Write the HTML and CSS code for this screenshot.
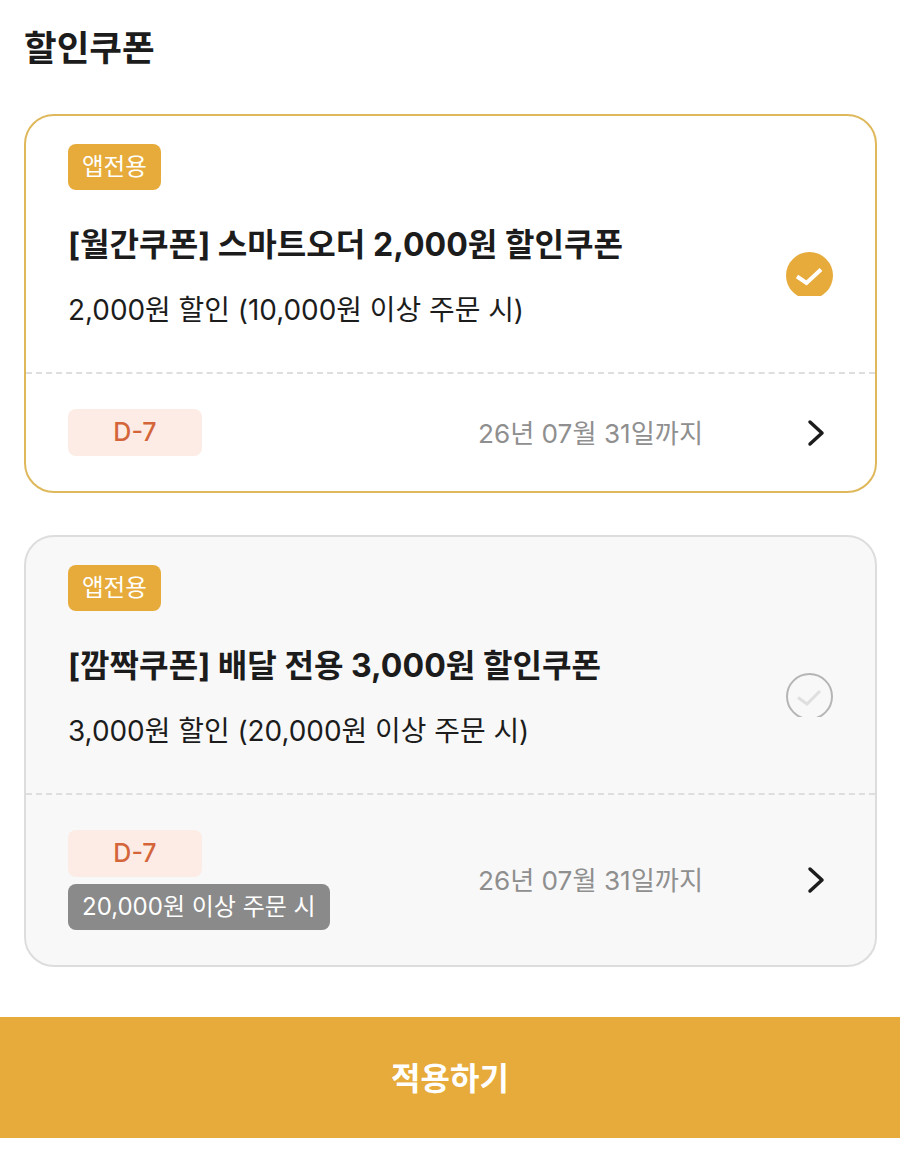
FILE: index.html
```html
<!DOCTYPE html>
<html lang="ko">
<head>
    <meta charset="UTF-8">
    <meta name="viewport" content="width=device-width, initial-scale=1.0">
    <title>할인쿠폰</title>
    <link rel="stylesheet" href="styles.css">
</head>
<body>
    <div class="container">
        <h1>할인쿠폰</h1>

        <div class="coupon coupon-selected">
            <div class="coupon-top">
                <div class="coupon-info">
                    <span class="badge-app">앱전용</span>
                    <h3>[월간쿠폰] 스마트오더 2,000원 할인쿠폰</h3>
                    <p>2,000원 할인 (10,000원 이상 주문 시)</p>
                </div>
                <svg class="check" width="47" height="44" viewBox="0 0 47 44">
                    <circle cx="23.5" cy="23.5" r="23.5" fill="#e6ab3a"/>
                    <path d="M11 24.5l9.500 6.500L35 17.500" fill="none" stroke="#fff" stroke-width="4"/>
                </svg>
            </div>
            <div class="coupon-bottom">
                <div class="tags">
                    <span class="tag-day">D-7</span>
                </div>
                <span class="date">26년 07월 31일까지</span>
                <svg class="arrow" width="20" height="28" viewBox="0 0 20 28">
                    <path d="M3 3l12 11L3 25" fill="none" stroke="#1c1c1c" stroke-width="3.500" stroke-linecap="round" stroke-linejoin="round"/>
                </svg>
            </div>
        </div>

        <div class="coupon coupon-disabled">
            <div class="coupon-top">
                <div class="coupon-info">
                    <span class="badge-app">앱전용</span>
                    <h3>[깜짝쿠폰] 배달 전용 3,000원 할인쿠폰</h3>
                    <p>3,000원 할인 (20,000원 이상 주문 시)</p>
                </div>
                <svg class="check" width="47" height="44" viewBox="0 0 47 44">
                    <circle cx="23.5" cy="23.5" r="22.500" fill="none" stroke="#b5b5b5" stroke-width="2"/>
                    <path d="M12 24.5l9 6.500L34 18" fill="none" stroke="#dfdfdf" stroke-width="3"/>
                </svg>
            </div>
            <div class="coupon-bottom">
                <div class="tags">
                    <span class="tag-day">D-7</span>
                    <span class="tag-min">20,000원 이상 주문 시</span>
                </div>
                <span class="date">26년 07월 31일까지</span>
                <svg class="arrow" width="20" height="28" viewBox="0 0 20 28">
                    <path d="M3 3l12 11L3 25" fill="none" stroke="#1c1c1c" stroke-width="3.500" stroke-linecap="round" stroke-linejoin="round"/>
                </svg>
            </div>
        </div>
    </div>

    <button class="apply-btn">적용하기</button>
</body>
</html>
```

FILE: styles.css
```css
body {
    font-family: 'Inter', 'Noto Sans CJK KR', sans-serif;
    background-color: #fff;
    color: #1c1c1c;
    margin: 0;
    padding: 0;
}

.container {
    padding: 24px 23px 50px 24px;
}

h1 {
    font-size: 35.5px;
    font-weight: 700;
    line-height: 50px;
    margin: 0 0 40px;
}

.coupon {
    border: 2px solid #ddd;
    border-radius: 30px;
    margin-bottom: 42px;
}

.coupon:last-child {
    margin-bottom: 0;
}

.coupon-selected {
    border-color: #dfb85c;
}

.coupon-disabled {
    background-color: #f8f8f8;
}

.coupon-top {
    display: flex;
    justify-content: space-between;
    padding: 28px 42px 42px;
    border-bottom: 2px dashed #dedede;
}

.coupon-info {
    display: flex;
    flex-direction: column;
    align-items: flex-start;
}

.badge-app {
    background-color: #e6ab3a;
    color: #fff;
    font-size: 23.5px;
    line-height: 46px;
    padding: 0 14px;
    border-radius: 8px;
}

.coupon h3 {
    font-size: 32.1px;
    font-weight: 700;
    line-height: 40px;
    margin: 35px 0 0;
}

.coupon p {
    font-size: 27.9px;
    line-height: 40px;
    margin: 25px 0 0;
}

.check {
    margin-top: 108px;
}

.coupon-bottom {
    display: flex;
    align-items: center;
    padding: 35px 48px 35px 42px;
}

.tags {
    flex: 1;
    display: flex;
    flex-direction: column;
    align-items: flex-start;
    gap: 7px;
}

.tag-day {
    width: 134px;
    text-align: center;
    background-color: #fdece5;
    color: #d4653a;
    font-size: 25px;
    font-weight: 500;
    line-height: 47px;
    border-radius: 8px;
}

.tag-min {
    background-color: #8a8a8a;
    color: #fff;
    font-size: 24px;
    line-height: 46px;
    padding: 0 14px;
    border-radius: 8px;
}

.date {
    color: #8f8f8f;
    font-size: 26.2px;
    margin-right: 104px;
    padding-bottom: 2px;
}

.apply-btn {
    display: block;
    width: 100%;
    height: 121px;
    padding: 0 0 4px;
    background-color: #e6ab3a;
    color: #fff;
    font-family: inherit;
    font-size: 32px;
    font-weight: 700;
    border: none;
    cursor: pointer;
}
```
